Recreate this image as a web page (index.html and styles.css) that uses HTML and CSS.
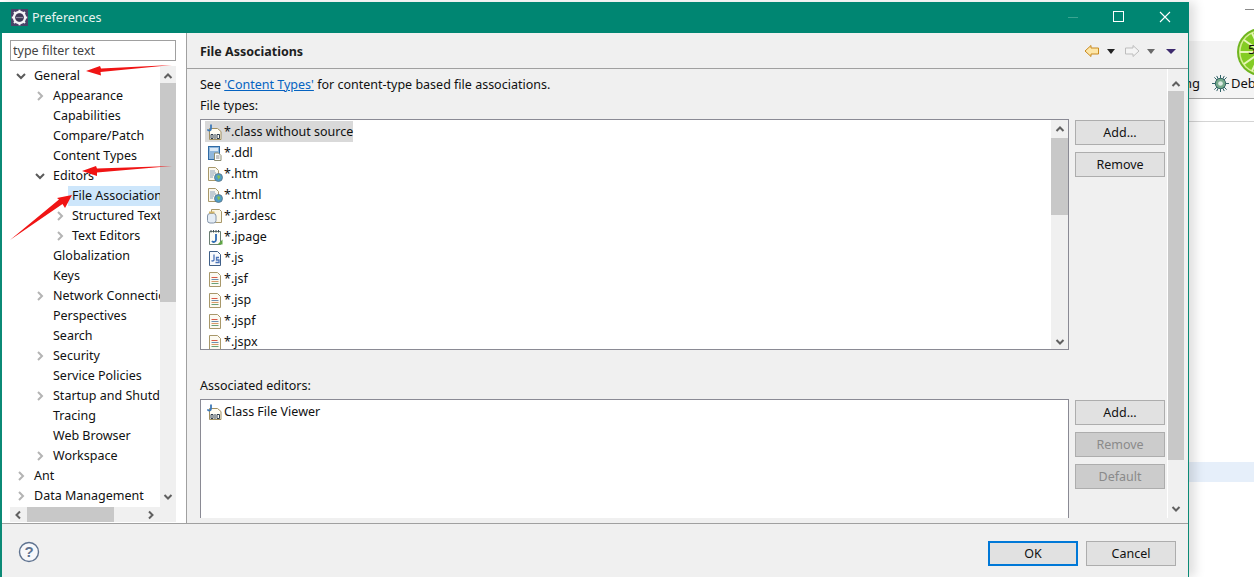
FILE: index.html
```html
<!DOCTYPE html>
<html lang="en">
<head>
<meta charset="utf-8">
<title>Preferences</title>
<link rel="stylesheet" href="styles.css">
</head>
<body>
<svg class="defs" width="0" height="0" aria-hidden="true">
  <defs>
    <symbol id="chev-r" viewBox="0 0 10 10"><path d="M3 1l4 4-4 4" fill="none" stroke="#b4b4b4" stroke-width="2"/></symbol>
    <symbol id="chev-d" viewBox="0 0 10 10"><path d="M1 3l4 4 4-4" fill="none" stroke="#5a5a5a" stroke-width="2"/></symbol>
    <symbol id="sb-up" viewBox="0 0 10 10"><path d="M1.500 7l3.500-3.500 3.500 3.500" fill="none" stroke="#606060" stroke-width="2"/></symbol>
    <symbol id="sb-down" viewBox="0 0 10 10"><path d="M1.500 3l3.500 3.500 3.500-3.500" fill="none" stroke="#606060" stroke-width="2"/></symbol>
    <symbol id="sb-left" viewBox="0 0 10 10"><path d="M7 1.500l-3.500 3.500 3.500 3.500" fill="none" stroke="#606060" stroke-width="2"/></symbol>
    <symbol id="sb-right" viewBox="0 0 10 10"><path d="M3 1.500l3.500 3.500-3.500 3.500" fill="none" stroke="#606060" stroke-width="2"/></symbol>
    <symbol id="i-class" viewBox="0 0 16 16">
      <path d="M2.500 4.500h8l3.500 3v8H2.500z" fill="#fffdf4" stroke="#a08f60"/>
      <path d="M4 .5v4.500a1.800 1.800 0 0 1-3.500.3" fill="none" stroke="#3f7ab8" stroke-width="1.800"/>
      <path d="M4 10.500h2v4H4zM8 10v5M10 10.500h2.500v4H10z" fill="none" stroke="#2e3f4f"/>
    </symbol>
    <symbol id="i-ddl" viewBox="0 0 16 16">
      <rect x="1.500" y="1.500" width="11" height="13" fill="#8fb6dc" stroke="#2f6aa4"/>
      <rect x="3" y="3" width="8" height="3" fill="#dbe9f6"/>
      <path d="M7.500 8h4l2.500 2.500v5H7.500z" fill="#fff" stroke="#8c8c70"/>
      <path d="M9 11h3.500M9 13h3.500" stroke="#8a8a8a"/>
    </symbol>
    <symbol id="i-html" viewBox="0 0 16 16">
      <path d="M1.500 1.500h7l3 3v10h-10z" fill="#fbf8ee" stroke="#a8986a"/>
      <path d="M3 5h5M3 7h6M3 9h4M3 11h3" stroke="#8aa0b8"/>
      <circle cx="11.500" cy="11.500" r="4" fill="#4f9cc6" stroke="#5b7384" stroke-width=".8"/>
      <path d="M10 10l2-1 1.500 2-2 2.500z" fill="#86bf58"/>
    </symbol>
    <symbol id="i-jar" viewBox="0 0 16 16">
      <path d="M4.500 1.500h8l2 2v11h-10z" fill="#fbf6e6" stroke="#a8986a"/>
      <rect x=".5" y="5.500" width="8.500" height="9.500" rx="2.500" fill="#e4ecf5" stroke="#8494a8"/>
      <rect x="2" y="3.500" width="5.500" height="2" fill="#d2b468"/>
    </symbol>
    <symbol id="i-jpage" viewBox="0 0 16 16">
      <path d="M2.500 2.500h11v13h-11z" fill="#fdfdf6" stroke="#6b7f72"/>
      <path d="M4 1v2.500M6.500 1v2.500M9 1v2.500M11.500 1v2.500" stroke="#3e4a54"/>
      <path d="M9 5v6a2.200 2.200 0 0 1-4 1" fill="none" stroke="#2f6cb4" stroke-width="1.800"/>
      <path d="M10.500 15.500l5-5v5z" fill="#5fa544"/>
    </symbol>
    <symbol id="i-js" viewBox="0 0 16 16">
      <path d="M2.500 1.500h8l3 3v11h-11z" fill="#f8fafd" stroke="#3f5f88"/>
      <path d="M7 4.500v5.500a1.500 1.500 0 0 1-2.500.5" fill="none" stroke="#4c75b8" stroke-width="1.300"/>
      <path d="M12 7.500H9.500V10H12v2.500H8.500" fill="none" stroke="#4c75b8" stroke-width="1.300"/>
    </symbol>
    <symbol id="i-jsp" viewBox="0 0 16 16">
      <path d="M2.500 1.500h8l3 3v11h-11z" fill="#fcfaf2" stroke="#a8986a"/>
      <path d="M4.500 6.500h6" stroke="#d85a48"/><path d="M4.500 8.500h7" stroke="#6d8fb0"/>
      <path d="M4.500 10.500h7" stroke="#d89a6a"/><path d="M4.500 12.500h7" stroke="#6aa078"/>
    </symbol>
  </defs>
</svg>

<div class="desk">
  <div class="desk-dash"></div>
  <div class="desk-bar">
    <span class="desk-text desk-cut">ng</span>
    <svg class="bug" width="17" height="17" viewBox="0 0 18 18">
      <path d="M9 0v18M0 9h18M2.500 2.500l13 13M15.500 2.500l-13 13M5 1l8 16M13 1L5 17" stroke="#24585f" stroke-width="1"/>
      <circle cx="9" cy="9" r="5.500" fill="#74a88a" stroke="#2f6060"/>
      <circle cx="9" cy="9" r="2.500" fill="#dcebe2"/>
    </svg>
    <span class="desk-text">Deb</span>
  </div>
  <div class="desk-line"></div>
  <div class="desk-row"></div>
  <div class="lime">
    <svg width="17" height="48" viewBox="0 0 17 48">
      <circle cx="24" cy="24" r="24" fill="#6fb51f"/>
      <circle cx="24" cy="24" r="22" fill="#d8ef96"/>
      <circle cx="24" cy="24" r="20.500" fill="#84cc24"/>
      <path d="M24 24L7 12M24 24L3 24M24 24L7 36M24 24L15 5M24 24L15 43" stroke="#e6f6b8" stroke-width="2"/>
    </svg>
    <span class="lime-num">5</span>
  </div>
</div>

<div class="dialog">
  <header class="titlebar">
    <svg class="app-icon" width="17" height="17" viewBox="0 0 17 17">
      <rect width="17" height="17" fill="#4a4368"/>
      <circle cx="8.500" cy="8.500" r="5.500" fill="none" stroke="#f4f4f6" stroke-width="2.400"/>
      <path d="M8.500 .8v3M8.500 13.200v3M.8 8.500h3M13.200 8.500h3M3 3l2 2M12 12l2 2M14 3l-2 2M5 12l-2 2" stroke="#f4f4f6" stroke-width="2"/>
      <circle cx="8.500" cy="8.500" r="4" fill="#3e3a55"/>
      <path d="M5 8.500h7" stroke="#8d8aa0" stroke-width="1.200"/>
    </svg>
    <span class="title">Preferences</span>
    <div class="win-controls">
      <svg width="12" height="12" viewBox="0 0 12 12"><path d="M1 6.500h10" stroke="#3aa591"/></svg>
      <svg width="12" height="12" viewBox="0 0 12 12"><rect x=".5" y=".5" width="10" height="10" fill="none" stroke="#fff"/></svg>
      <svg width="12" height="12" viewBox="0 0 12 12"><path d="M1 1l10 10M11 1L1 11" stroke="#fff" stroke-width="1.100"/></svg>
    </div>
  </header>

  <div class="main">
    <aside class="nav">
      <input class="filter" type="text" value="type filter text" aria-label="Filter">
      <div class="tree">
        <ul class="tree-rows">
          <li class="row l0"><svg class="tw"><use href="#chev-d"/></svg><span>General</span></li>
          <li class="row l1"><svg class="tw"><use href="#chev-r"/></svg><span>Appearance</span></li>
          <li class="row l1"><i class="tw"></i><span>Capabilities</span></li>
          <li class="row l1"><i class="tw"></i><span>Compare/Patch</span></li>
          <li class="row l1"><i class="tw"></i><span>Content Types</span></li>
          <li class="row l1"><svg class="tw"><use href="#chev-d"/></svg><span>Editors</span></li>
          <li class="row l2 sel"><i class="tw"></i><span>File Associations</span></li>
          <li class="row l2"><svg class="tw"><use href="#chev-r"/></svg><span>Structured Text Editors</span></li>
          <li class="row l2"><svg class="tw"><use href="#chev-r"/></svg><span>Text Editors</span></li>
          <li class="row l1"><i class="tw"></i><span>Globalization</span></li>
          <li class="row l1"><i class="tw"></i><span>Keys</span></li>
          <li class="row l1"><svg class="tw"><use href="#chev-r"/></svg><span>Network Connections</span></li>
          <li class="row l1"><i class="tw"></i><span>Perspectives</span></li>
          <li class="row l1"><i class="tw"></i><span>Search</span></li>
          <li class="row l1"><svg class="tw"><use href="#chev-r"/></svg><span>Security</span></li>
          <li class="row l1"><i class="tw"></i><span>Service Policies</span></li>
          <li class="row l1"><svg class="tw"><use href="#chev-r"/></svg><span>Startup and Shutdown</span></li>
          <li class="row l1"><i class="tw"></i><span>Tracing</span></li>
          <li class="row l1"><i class="tw"></i><span>Web Browser</span></li>
          <li class="row l1"><svg class="tw"><use href="#chev-r"/></svg><span>Workspace</span></li>
          <li class="row l0"><svg class="tw"><use href="#chev-r"/></svg><span>Ant</span></li>
          <li class="row l0"><svg class="tw"><use href="#chev-r"/></svg><span>Data Management</span></li>
        </ul>
        <div class="vbar tree-v">
          <svg class="sb-ico"><use href="#sb-up"/></svg>
          <div class="track"><div class="thumb tree-thumb"></div></div>
          <svg class="sb-ico"><use href="#sb-down"/></svg>
        </div>
        <div class="hbar">
          <svg class="sb-ico"><use href="#sb-left"/></svg>
          <div class="htrack"><div class="hthumb"></div></div>
          <svg class="sb-ico"><use href="#sb-right"/></svg>
        </div>
      </div>
    </aside>

    <section class="page">
      <div class="page-head">
        <h1 class="page-title">File Associations</h1>
        <div class="nav-arrows">
          <svg width="16" height="14" viewBox="0 0 16 14"><path d="M7 1.500L1 7l6 5.500V10h7.500V4H7z" fill="#fde6a8" stroke="#c98a1e"/></svg>
          <i class="tri dark"></i>
          <svg class="fwd" width="16" height="14" viewBox="0 0 16 14"><path d="M9 1.500L15 7l-6 5.500V10H1.500V4H9z" fill="#f4f4f4" stroke="#bdbdbd"/></svg>
          <i class="tri grey"></i>
          <i class="tri purple"></i>
        </div>
      </div>
      <div class="page-scroll">
        <div class="page-body">
          <p class="see">See <a href="#">'Content Types'</a> for content-type based file associations.</p>
          <label class="cap types-cap">File types:</label>
          <div class="group">
            <div class="list types">
              <ul class="items">
                <li class="item on"><svg class="ico"><use href="#i-class"/></svg><span>*.class without source</span></li>
                <li class="item"><svg class="ico"><use href="#i-ddl"/></svg><span>*.ddl</span></li>
                <li class="item"><svg class="ico"><use href="#i-html"/></svg><span>*.htm</span></li>
                <li class="item"><svg class="ico"><use href="#i-html"/></svg><span>*.html</span></li>
                <li class="item"><svg class="ico"><use href="#i-jar"/></svg><span>*.jardesc</span></li>
                <li class="item"><svg class="ico"><use href="#i-jpage"/></svg><span>*.jpage</span></li>
                <li class="item"><svg class="ico"><use href="#i-js"/></svg><span>*.js</span></li>
                <li class="item"><svg class="ico"><use href="#i-jsp"/></svg><span>*.jsf</span></li>
                <li class="item"><svg class="ico"><use href="#i-jsp"/></svg><span>*.jsp</span></li>
                <li class="item"><svg class="ico"><use href="#i-jsp"/></svg><span>*.jspf</span></li>
                <li class="item"><svg class="ico"><use href="#i-jsp"/></svg><span>*.jspx</span></li>
              </ul>
              <div class="vbar list-v">
                <svg class="sb-ico"><use href="#sb-up"/></svg>
                <div class="track"><div class="thumb list-thumb"></div></div>
                <svg class="sb-ico"><use href="#sb-down"/></svg>
              </div>
            </div>
            <div class="btns">
              <button class="btn" type="button">Add...</button>
              <button class="btn" type="button">Remove</button>
            </div>
          </div>
          <label class="cap assoc-cap">Associated editors:</label>
          <div class="group">
            <div class="list assoc">
              <ul class="items">
                <li class="item"><svg class="ico"><use href="#i-class"/></svg><span>Class File Viewer</span></li>
              </ul>
            </div>
            <div class="btns">
              <button class="btn" type="button">Add...</button>
              <button class="btn off" type="button">Remove</button>
              <button class="btn off" type="button">Default</button>
            </div>
          </div>
        </div>
        <div class="vbar page-v">
          <svg class="sb-ico"><use href="#sb-up"/></svg>
          <div class="track"><div class="thumb page-thumb"></div></div>
          <svg class="sb-ico"><use href="#sb-down"/></svg>
        </div>
      </div>
    </section>
  </div>

  <footer class="foot">
    <svg class="help" width="22" height="22" viewBox="0 0 22 22">
      <circle cx="11" cy="11" r="9.500" fill="#f7f8fb" stroke="#5f7390" stroke-width="1.400"/>
      <text class="help-q" x="11" y="16" text-anchor="middle">?</text>
    </svg>
    <div class="foot-btns">
      <button class="btn ok" type="button">OK</button>
      <button class="btn" type="button">Cancel</button>
    </div>
  </footer>
</div>

<svg class="arrows" width="1254" height="577" viewBox="0 0 1254 577" aria-hidden="true">
  <path d="M172 65L101 68.500 100 66 86 71 101 75.500 100.500 72z" fill="#f01414"/>
  <path d="M172 166L97 168.500 96 166 82 171 97 176 97 172.500z" fill="#f01414"/>
  <path d="M10 240L59 199.500 57 198 72 195 65 208 62.500 204z" fill="#f01414"/>
</svg>
</body>
</html>
```

FILE: styles.css
```css
* { box-sizing: border-box; }
html, body { margin: 0; padding: 0; }
body {
  width: 1254px;
  height: 577px;
  overflow: hidden;
  position: relative;
  background: #fff;
  font-family: "Noto Sans", "Open Sans", sans-serif;
  font-size: 12.5px;
  color: #111;
}
ul { list-style: none; margin: 0; padding: 0; }
.defs { position: absolute; }

/* background application peeking out behind the dialog */
.desk { position: absolute; inset: 0; }
.desk-dash { position: absolute; left: 1245px; top: 9px; width: 9px; height: 1px; background: #8a8a8a; }
.desk-bar {
  position: absolute; left: 1189px; top: 41px; width: 65px; height: 58px;
  background: #f4f4f4; border-bottom: 1px solid #a8a8a8;
  display: flex; align-items: flex-end; padding-bottom: 6px;
}
.desk-text { font-size: 13px; color: #111; line-height: 18px; flex: none; }
.desk-cut { margin-left: -5px; }
.bug { margin: 0 2px 0 12px; flex: none; }
.desk-line { position: absolute; left: 1189px; top: 121px; width: 65px; height: 1px; background: #d4d4d4; }
.desk-row { position: absolute; left: 1189px; top: 462px; width: 65px; height: 20px; background: #e6effa; }
.lime { position: absolute; left: 1237px; top: 28px; height: 48px; width: 17px; overflow: hidden; }
.lime svg { display: block; }
.lime-num { position: absolute; left: 11px; top: 12px; font-size: 13px; line-height: 18px; color: #111; }

.dialog {
  position: absolute; left: 0; top: 2px; width: 1189px; height: 575px;
  display: flex; flex-direction: column;
  background: #f0f0f0;
  border-left: 2px solid #0b8a76; border-right: 1px solid #0b8a76;
  box-shadow: 6px 0 10px rgba(0,0,0,.13);
  z-index: 2;
}
.titlebar {
  height: 31px; flex: none; margin-left: -2px; margin-right: -1px;
  background: #008672;
  display: flex; align-items: center; padding: 0 0 1px 11px;
}
.app-icon { flex: none; }
.title { margin-left: 4px; font-size: 12.5px; color: #e8f3f1; }
.win-controls { margin-left: auto; display: flex; gap: 34px; padding-right: 18px; align-items: center; }
.win-controls svg { display: block; }

.main { flex: 1; display: flex; min-height: 0; }
.nav {
  width: 185px; flex: none; background: #fff;
  border-right: 1px solid #a0a0a0;
  padding: 7px 10px 0 8px;
  display: flex; flex-direction: column;
}
.filter {
  height: 21px; width: 166px; flex: none;
  border: 1px solid #a0a0a0; background: #fff;
  font: inherit; color: #444; padding: 0 2px 1px; outline: 0;
}
.tree {
  margin-top: 5px; width: 166px; height: 456px;
  display: grid; grid-template-columns: 150px 16px; grid-template-rows: 441px 15px;
}
.tree-rows { overflow: hidden; grid-column: 1; grid-row: 1; }
.row { height: 20px; display: flex; align-items: center; white-space: nowrap; }
.row span { line-height: 20px; }
.tw { width: 10px; height: 10px; flex: none; display: block; overflow: visible; }
.l0 { padding-left: 6px; }
.l0 .tw { margin-right: 8px; }
.l1 { padding-left: 25px; }
.l1 .tw { margin-right: 8px; }
.l2 { padding-left: 45px; }
.l2 .tw { margin-right: 7px; }
.sel .tw { margin-right: 7px; }
.sel span { background: #cde6fb; margin-left: -4px; padding-left: 4px; min-width: 95px; }

.vbar { display: flex; flex-direction: column; align-items: center; background: #f0f0f0; }
.sb-ico { width: 10px; height: 10px; flex: none; display: block; }
.track { flex: 1; width: 100%; }
.thumb { background: #c8c8c8; width: 100%; }
.tree-v { grid-column: 2; grid-row: 1; padding: 5px 0 5px; }
.tree-v .track { padding-top: 2px; }
.tree-thumb { height: 219px; }
.hbar {
  grid-column: 1 / span 2; grid-row: 2;
  background: #f0f0f0; display: flex; align-items: center; padding: 0 20px 0 3px;
}
.htrack { flex: 1; padding-left: 4px; height: 100%; }
.hthumb { width: 87px; height: 100%; background: #c8c8c8; }

.page { flex: 1; display: flex; flex-direction: column; min-width: 0; }
.page-head {
  height: 36px; flex: none; border-bottom: 1px solid #a0a0a0;
  display: flex; align-items: center; justify-content: space-between;
  padding: 1px 12px 0 13px;
}
.page-title { margin: 0; font-size: 12.5px; font-weight: 700; color: #1e1e1e; }
.nav-arrows { display: flex; align-items: center; }
.nav-arrows svg { display: block; }
.tri { width: 0; height: 0; border-left: 4px solid transparent; border-right: 4px solid transparent; border-top: 5px solid #222; display: block; }
.tri.dark { margin-left: 7px; }
.nav-arrows .fwd { margin-left: 9px; }
.tri.grey { border-top-color: #6a6a6a; margin-left: 7px; }
.tri.purple { border-top-color: #3d2a6e; margin-left: 11px; border-left-width: 5px; border-right-width: 5px; }

.page-scroll { flex: 1; display: flex; min-height: 0; overflow: hidden; margin-bottom: 5px; }
.page-body { width: 980px; flex: none; padding: 6px 0 0 13px; }
.see { margin: 0; line-height: 20px; }
.see a { color: #0563c1; }
.cap { display: block; line-height: 20px; }
.types-cap { margin-top: 1px; }
.assoc-cap { margin-top: 26px; }
.group { display: flex; gap: 6px; margin-top: 3px; }
.list { width: 869px; background: #fff; border: 1px solid #8a8a94; display: flex; overflow: hidden; }
.types { height: 231px; }
.assoc { height: 119px; border-bottom: 0; }
.items { flex: 1; padding: 1px 0 0 4px; overflow: hidden; }
.item { height: 21px; display: flex; align-items: center; white-space: nowrap; }
.item span { line-height: 21px; }
.item.on { background: #d9d9d9; width: 148px; }
.ico { width: 16px; height: 16px; flex: none; margin: 0 1px 0 2px; display: block; }
.list-v { width: 17px; flex: none; padding: 4px 0 2px; background: #f0f0f0; }
.list-v .track { padding-top: 4px; }
.list-thumb { height: 77px; }
.btns { display: flex; flex-direction: column; gap: 7px; padding-top: 1px; }
.btn {
  width: 90px; height: 25px; padding: 0;
  background: #e1e1e1; border: 1px solid #adadad; border-radius: 0;
  font: inherit; color: #111;
}
.btn.off { background: #cccccc; color: #8a8a8a; }
.page-v { width: 16px; flex: none; margin-left: 1px; padding: 10px 0 4px; box-shadow: -1px 0 0 #fff; }
.page-v .track { padding-top: 2px; }
.page-thumb { height: 369px; }

.foot {
  height: 54px; flex: none; border-top: 1px solid #a0a0a0;
  display: flex; align-items: center; justify-content: space-between;
  padding: 6px 12px 0 16px; background: #f0f0f0;
}
.help { margin-top: -4px; }
.help-q { font-size: 15px; font-weight: 700; fill: #5f7390; font-family: "Liberation Sans", sans-serif; }
.foot-btns { display: flex; gap: 8px; }
.btn.ok { border: 2px solid #0078d7; }

.arrows { position: absolute; left: 0; top: 0; z-index: 5; pointer-events: none; }
```
